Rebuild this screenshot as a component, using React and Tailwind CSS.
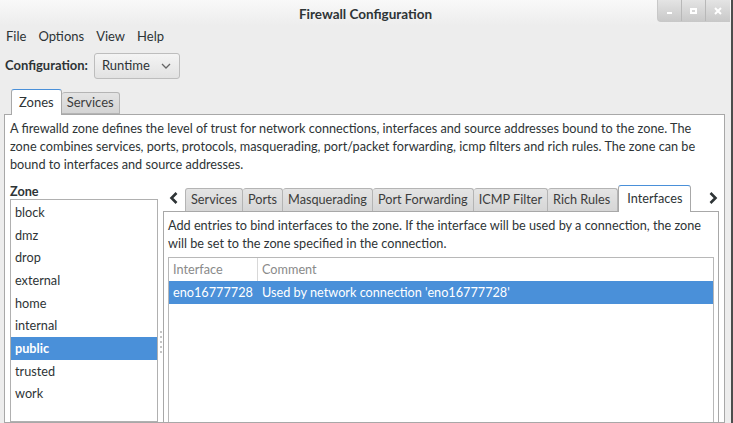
import React from "react";

const zones = ["block", "dmz", "drop", "external", "home", "internal", "public", "trusted", "work"];
const zoneTabs = ["Services", "Ports", "Masquerading", "Port Forwarding", "ICMP Filter", "Rich Rules"];

const Chevron = ({ dir }) => (
  <svg width="12" height="14" viewBox="0 0 12 14">
    <path
      d={dir === "left" ? "M8.5 2 L3.5 7 L8.5 12" : "M3.5 2 L8.5 7 L3.5 12"}
      fill="none"
      stroke="#2e3436"
      strokeWidth="2.6"
    />
  </svg>
);

export default function App() {
  return (
    <div className="w-[733px] h-[423px] overflow-hidden flex bg-[#ededed] text-[12.7px] text-[#2e3436] font-['Lato','Liberation_Sans',sans-serif]">
      <div className="flex-1 flex flex-col min-w-0">
        {/* title bar */}
        <div className="h-[25px] shrink-0 grid grid-cols-[1fr_auto_1fr] items-start bg-gradient-to-b from-[#f9f9f9] to-[#ededed]">
          <div />
          <div className="pt-[4px] font-bold text-[13.5px] text-[#2e3436]">Firewall Configuration</div>
          <div className="flex justify-end">
            <div className="flex h-[22px] mr-[1px] rounded-bl-[4px] overflow-hidden border-l border-b border-[#c8c8c8] bg-gradient-to-b from-[#e4e4e4] to-[#c9c9c9]">
              <div className="w-[24px] flex items-end justify-center pb-[7px] border-r border-[#b8b8b8]">
                <div className="w-[5px] h-[2px] bg-white" />
              </div>
              <div className="w-[24px] flex items-center justify-center border-r border-[#b8b8b8]">
                <div className="w-[7px] h-[6px] border-2 border-white" />
              </div>
              <div className="w-[24px] flex items-center justify-center">
                <svg width="8" height="8" viewBox="0 0 8 8">
                  <path d="M1 1 L7 7 M7 1 L1 7" stroke="#fff" strokeWidth="2" />
                </svg>
              </div>
            </div>
          </div>
        </div>

        {/* menu bar */}
        <div className="h-[23px] shrink-0 flex items-center gap-[12px] px-[6px] text-[13px]">
          <span>File</span>
          <span>Options</span>
          <span>View</span>
          <span>Help</span>
        </div>

        {/* configuration */}
        <div className="mt-[5px] h-[26px] shrink-0 flex items-center px-[5px] gap-[6px] text-[13px]">
          <span className="font-bold">Configuration:</span>
          <div className="w-[86px] h-[26px] flex items-center justify-between pl-[7px] pr-[8px] rounded-[3px] border border-[#bdbdbd] bg-gradient-to-b from-[#f4f4f4] to-[#e2e2e2]">
            <span>Runtime</span>
            <svg width="10" height="6" viewBox="0 0 10 6">
              <path d="M1 1 L5 5 L9 1" fill="none" stroke="#666" strokeWidth="1.3" />
            </svg>
          </div>
        </div>

        {/* main tabs */}
        <div className="mt-[10px] shrink-0 flex items-end pl-[11px] h-[25px] text-[13px]">
          <div className="h-[26px] px-[7px] flex items-center bg-white border border-b-0 border-[#a8a8a8] border-t-[#4a90d9] rounded-t-[3px] -mb-[1px] relative z-10">
            Zones
          </div>
          <div className="h-[22px] px-[5px] flex items-center border border-[#b4b4b4] border-l-0 rounded-t-[3px] bg-gradient-to-b from-[#e4e4e4] to-[#d4d4d4] text-[#3c3c3c]">
            Services
          </div>
        </div>

        {/* main panel */}
        <div className="flex-1 min-h-0 ml-[4px] mr-[6px] bg-white border border-[#a8a8a8] flex flex-col">
          <p className="px-[5px] pt-[4px] leading-[18px] whitespace-nowrap">
            A firewalld zone defines the level of trust for network connections, interfaces and source addresses bound to the zone. The
            <br />
            zone combines services, ports, protocols, masquerading, port/packet forwarding, icmp filters and rich rules. The zone can be
            <br />
            bound to interfaces and source addresses.
          </p>

          <div className="flex-1 min-h-0 flex mt-[11px] pl-[5px]">
            {/* zone list */}
            <div className="w-[148px] shrink-0 flex flex-col">
              <div className="font-bold leading-[14px] h-[15px]">Zone</div>
              <div className="flex-1 border border-[#b0b0b0] bg-white pt-[1px]">
                {zones.map((z) => (
                  <div
                    key={z}
                    className={`h-[22.7px] flex items-center px-[4px] ${
                      z === "public" ? "bg-[#4a90d9] text-white font-bold" : ""
                    }`}
                  >
                    {z}
                  </div>
                ))}
              </div>
            </div>

            {/* pane handle */}
            <div className="w-[5px] shrink-0 flex flex-col items-center pt-[147px] gap-[3px]">
              <div className="w-[2px] h-[2px] bg-[#c4c4c4]" />
              <div className="w-[2px] h-[2px] bg-[#c4c4c4]" />
              <div className="w-[2px] h-[2px] bg-[#c4c4c4]" />
              <div className="w-[2px] h-[2px] bg-[#c4c4c4]" />
              <div className="w-[2px] h-[2px] bg-[#c4c4c4]" />
            </div>

            {/* zone settings */}
            <div className="flex-1 min-w-0 flex flex-col">
              <div className="h-[27px] shrink-0 flex items-end">
                <div className="w-[20px] h-[26px] flex items-center justify-center pl-[2px]">
                  <Chevron dir="left" />
                </div>
                {zoneTabs.map((t, i) => (
                  <div
                    key={t}
                    className={`h-[23px] px-[5px] flex items-center border-t border-r border-[#b4b4b4] rounded-t-[3px] bg-gradient-to-b from-[#e4e4e4] to-[#d6d6d6] text-[#3c3c3c] ${
                      i === 0 ? "border-l ml-[2px]" : ""
                    } ${i === 5 ? "pr-[7px]" : ""}`}
                  >
                    {t}
                  </div>
                ))}
                <div className="h-[27px] px-[8px] flex items-center bg-white border border-b-0 border-[#a8a8a8] border-t-[#4a90d9] rounded-t-[3px] -mb-[1px] relative z-10">
                  Interfaces
                </div>
                <div className="flex-1 h-[26px] flex items-center justify-end pr-[5px]">
                  <Chevron dir="right" />
                </div>
              </div>

              <div className="flex-1 min-h-0 mr-[5px] border border-b-0 border-[#a8a8a8] bg-white flex flex-col px-[4px]">
                <p className="pt-[4px] leading-[18px] whitespace-nowrap">
                  Add entries to bind interfaces to the zone. If the interface will be used by a connection, the zone
                  <br />
                  will be set to the zone specified in the connection.
                </p>
                <div className="flex-1 mt-[5px] border border-b-0 border-[#b8b8b8] flex flex-col">
                  <div className="h-[23px] shrink-0 flex items-center text-[#8a8a8a]">
                    <div className="w-[89px] h-full flex items-center pl-[4px] border-r border-[#d8d8d8]">Interface</div>
                    <div className="pl-[4px]">Comment</div>
                  </div>
                  <div className="h-[23px] shrink-0 flex items-center bg-[#4a90d9] text-white">
                    <div className="w-[89px] pl-[4px]">eno16777728</div>
                    <div className="pl-[4px]">Used by network connection 'eno16777728'</div>
                  </div>
                </div>
              </div>
            </div>
          </div>
        </div>
      </div>
      <div className="w-[2px] shrink-0 bg-[#4d4d4d]" />
    </div>
  );
}
